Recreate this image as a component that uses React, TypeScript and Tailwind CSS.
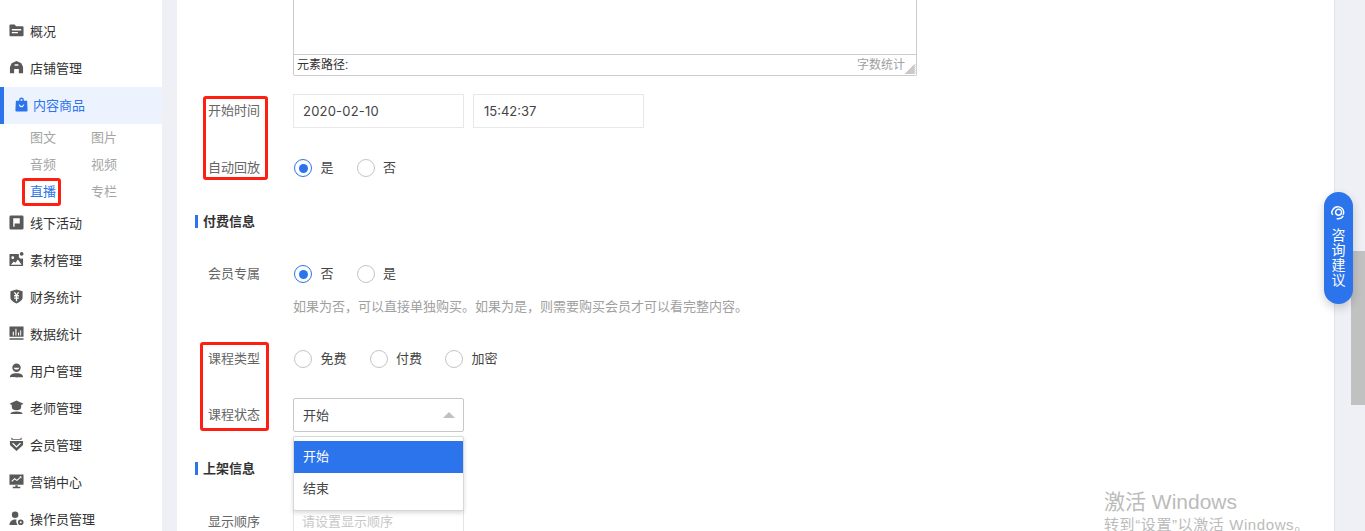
import React from "react";

const F = "[font-family:'Liberation_Sans','Noto_Sans_CJK_SC',sans-serif]";

const icons: Record<string, React.ReactNode> = {
  folder: <path fillRule="evenodd" d="M.5 2.500A1 1 0 011.500 1.500h4.500l1.500 2h7a1 1 0 011 1V13a1 1 0 01-1 1h-13a1 1 0 01-1-1zM3 6.500V8h10V6.500zm0 3V11h6.500V9.500z" />,
  shop: <path fillRule="evenodd" d="M8 1l5.200 2.500L15 7.500V14h-4.500V9.500h-5V14H1V7.500l1.800-4zM6 4.500V6h4V4.500z" />,
  bag: <path fillRule="evenodd" d="M5.500 4V3a2.500 2.500 0 015 0v1H14l.5 10.500a1 1 0 01-1 1h-11a1 1 0 01-1-1L2 4zM7 4h2V3a1 1 0 00-2 0zM5 8c.6 2 1.600 3 3 3s2.400-1 3-3h-1c-.4 1-1 1.500-2 1.500S6.400 9 6 8z" />,
  flag: <path fillRule="evenodd" d="M2 .500h12a1.500 1.500 0 011.500 1.500v12a1.500 1.500 0 01-1.500 1.500H2A1.500 1.500 0 01.500 14V2A1.500 1.500 0 012 .500zM4.500 3.500v9H6V9h5.500V3.500z" />,
  image: <path fillRule="evenodd" d="M.5 2H10.500v2.500a2.500 2.500 0 003.500 2.500h1v8H.5zM4 4.500a1.500 1.500 0 100 3 1.500 1.500 0 000-3zM2 13.500h11.500L9.500 8 6.800 11.500 5 10zM13.500 0a2 2 0 110 4 2 2 0 010-4z" />,
  money: <path fillRule="evenodd" d="M8 .500l6.500 2v6.500c0 3-3.500 5-6.500 6.500-3-1.500-6.500-3.500-6.500-6.500V2.500zM5 3.500L7 6.500H5.500V8H7.300v1H5.500v1.500h1.800V13h1.400v-2.500h1.800V9H8.700V8h1.800V6.500H9l2-3H9.300L8 5.700 6.700 3.500z" />,
  chart: <path fillRule="evenodd" d="M.5.500h15v11H.5zM4 6v4h1.200V6zm2.800-3v7H8V3zm2.800 4v3h1.200V7zm2.400-2.500V10H13V4.500zM.5 13h15v1.700H.5z" />,
  user: <path fillRule="evenodd" d="M8 .500a4.500 4.500 0 110 9 4.500 4.500 0 010-9zM5 5c.5 1.300 1.600 2 3 2s2.500-.7 3-2zM1 15c0-2.500 2.500-4 7-4s7 1.500 7 4c0 .5-14 .5-14 0z" />,
  teacher: <path fillRule="evenodd" d="M8 .500L15.500 4 13 5.300V7.500C13 9.700 11 11 8 11S3 9.700 3 7.500V5.300L.5 4zM1.500 15c0-1.800 2-2.800 6.500-2.800s6.500 1 6.500 2.800z" />,
  vip: <path fillRule="evenodd" d="M2.500.500L4.500 2h7l2-1.500V3h-11zM1 4.300h14V8.500L8 15 1 8.500zM4.300 6L8 9.500 11.700 6l1 1L8 11.500 3.300 7z" />,
  market: <path fillRule="evenodd" d="M.5.500h15v11H.5zM2.500 7.500l.8.800L6 5.800 8.500 7.500l4-3.500 .7.700V2.500H11l.8.800L8.300 6 6 4.300zM6.800 12h2.400v1.700H12V15.300H4V13.700h2.800z" />,
  op: <path fillRule="evenodd" d="M6.500.500a3.500 3.500 0 110 7 3.500 3.500 0 010-7zM.5 15c0-3.500 2.500-6 6-6 .8 0 1.500.1 1.500.1-.6 1.800-.2 4.300 1.200 5.900zM12.500 9a3 3 0 110 6 3 3 0 010-6zm0 2a1 1 0 100 2 1 1 0 000-2z" />,
};

function Icon({ name, className = "text-[#595959]" }: { name: string; className?: string }) {
  return (
    <svg viewBox="0 0 16 16" className={`w-[15px] h-[15px] shrink-0 fill-current ${className}`}>
      {icons[name]}
    </svg>
  );
}

function NavItem({ icon, label }: { icon: string; label: string }) {
  return (
    <div className="h-[37px] flex items-center pl-[9px] gap-[6px] text-[13px] text-[#333]">
      <span className="-mt-[3px]"><Icon name={icon} /></span>
      <span>{label}</span>
    </div>
  );
}

function Radio({ checked, label }: { checked?: boolean; label: string }) {
  return (
    <label className="flex items-center mr-[23px]">
      <span className={`w-[18px] h-[18px] rounded-full border-[1.5px] flex items-center justify-center ${checked ? "border-[#2c74ec]" : "border-[#c4c4c4]"}`}>
        {checked && <span className="w-[9px] h-[9px] rounded-full bg-[#2c74ec]" />}
      </span>
      <span className="ml-[8.5px] text-[13px] text-[#444]">{label}</span>
    </label>
  );
}

function Row({ label, className, children }: { label: string; className: string; children?: React.ReactNode }) {
  return (
    <div className={`flex items-center ${className}`}>
      <div className="w-[116px] pr-[33px] text-right text-[13px] text-[#666] shrink-0">{label}</div>
      {children}
    </div>
  );
}

function Section({ label, className }: { label: string; className: string }) {
  return (
    <div className={`flex items-center pl-[18px] ${className}`}>
      <span className="w-[3px] h-[13px] bg-[#2c74ec] mr-[5px]" />
      <span className="text-[13px] font-bold text-[#333] pt-px">{label}</span>
    </div>
  );
}

function RedBox({ className }: { className: string }) {
  return <div className={`absolute border-[3px] border-[#ff1f12] rounded-[3px] ${className}`} />;
}

export default function App() {
  return (
    <div className={`relative h-[531px] w-[1365px] overflow-hidden flex bg-[#eff0f6] ${F}`}>
      <aside className="w-[162px] h-full bg-white shrink-0 pt-[13px]">
        <NavItem icon="folder" label="概况" />
        <NavItem icon="shop" label="店铺管理" />
        <div className="h-[37px] flex items-center pl-[10px] gap-[4px] bg-[#ecf3fe] border-l-[4px] border-[#2c74ec] text-[13px] text-[#2c74ec]">
          <span className="-mt-[3px]"><Icon name="bag" className="text-[#2c74ec]" /></span>
          <span>内容商品</span>
        </div>
        <div className="grid grid-cols-[61px_61px] pl-[30px] text-[13px] text-[#a5a5a5] auto-rows-[27px] items-center">
          <span>图文</span><span>图片</span>
          <span>音频</span><span>视频</span>
          <span className="text-[#2c74ec] pt-px">直播</span><span className="pt-px">专栏</span>
        </div>
        <div>
          <NavItem icon="flag" label="线下活动" />
          <NavItem icon="image" label="素材管理" />
          <NavItem icon="money" label="财务统计" />
          <NavItem icon="chart" label="数据统计" />
          <NavItem icon="user" label="用户管理" />
          <NavItem icon="teacher" label="老师管理" />
          <NavItem icon="vip" label="会员管理" />
          <NavItem icon="market" label="营销中心" />
          <NavItem icon="op" label="操作员管理" />
        </div>
      </aside>

      <main className="ml-[15px] w-[1158px] h-full bg-white border-r border-[#e3e3e8] shrink-0">
        <div className="ml-[116px] w-[624px] h-[76px] border border-t-0 border-[#cccccc] rounded-b-[2px] flex flex-col justify-end">
          <div className="h-[21px] border-t border-[#cccccc] flex items-center justify-between pl-[3px] text-[12px] text-[#333]">
            <span>元素路径:</span>
            <span className="flex items-center">
              <span className="text-[#a0a0a0] text-[12px] mr-[-1px]">字数统计</span>
              <svg viewBox="0 0 12 12" className="w-[12px] h-[12px] mt-[8px] stroke-[#777]" strokeWidth="0.800">
                <path d="M11 1.500L1.500 11M11 3.500L3.500 11M11 5.500L5.500 11M11 7.500L7.500 11M11 9.500L9.500 11" />
              </svg>
            </span>
          </div>
        </div>

        <Row label="开始时间" className="mt-[18px] h-[34px]">
          <div className="w-[171px] h-[34px] border border-[#e8e8e8] flex items-center pl-[9px] pt-px text-[13px] tracking-[0.2px] text-[#444] [font-family:Inter,sans-serif]">2020-02-10</div>
          <div className="ml-[9px] w-[171px] h-[34px] border border-[#e8e8e8] flex items-center pl-[10px] pt-px text-[13px] text-[#444] [font-family:Inter,sans-serif]">15:42:37</div>
        </Row>
        <Row label="自动回放" className="mt-[23px] h-[34px]">
          <span className="ml-px" />
          <Radio checked label="是" />
          <Radio label="否" />
        </Row>
        <Section label="付费信息" className="mt-[19px] h-[34px]" />
        <Row label="会员专属" className="mt-[19px] h-[34px]">
          <span className="ml-px" />
          <Radio checked label="否" />
          <Radio label="是" />
        </Row>
        <div className="ml-[116px] mt-[7px] h-[18px] leading-[18px] text-[13px] text-[#a0a0a0]">如果为否，可以直接单独购买。如果为是，则需要购买会员才可以看完整内容。</div>
        <Row label="课程类型" className="mt-[26px] h-[34px]">
          <span className="ml-px" />
          <Radio label="免费" />
          <Radio label="付费" />
          <Radio label="加密" />
        </Row>
        <Row label="课程状态" className="mt-[22px] h-[34px]">
          <div className="w-[171px] h-[34px] border border-[#c8c8c8] rounded-[2px] flex items-center justify-between pl-[9px] pr-[8px] text-[13px] text-[#444]">
            <span className="pt-px">开始</span>
            <span className="w-0 h-0 border-x-[6px] border-x-transparent border-b-[6px] border-b-[#c0c0c0]" />
          </div>
        </Row>
        <Section label="上架信息" className="mt-[19px] h-[34px]" />
        <Row label="显示顺序" className="mt-[20px] h-[34px]">
          <div className="w-[171px] h-[34px] border border-[#e4e4e4] flex items-center pl-[8px] text-[13px] text-[#c8c8c8]">请设置显示顺序</div>
        </Row>
      </main>

      <div className="flex-1 h-full bg-[#eff0f6] relative">
        <div className="absolute right-0 top-[251px] w-[14px] h-[154px] bg-[#c1c1c1]" />
      </div>

      <div className="absolute left-[293px] top-[436px] w-[171px] h-[75px] bg-white border border-[#d8d8d8] rounded-[2px] shadow-[0_2px_4px_rgba(0,0,0,0.15)] pt-[4px] text-[13px]">
        <div className="h-[32px] bg-[#2c74ec] text-white flex items-center pl-[9px]">开始</div>
        <div className="h-[32px] text-[#444] flex items-center pl-[9px]">结束</div>
      </div>

      <RedBox className="left-[203px] top-[96px] w-[65px] h-[84px]" />
      <RedBox className="left-[22px] top-[178px] w-[39px] h-[28px]" />
      <RedBox className="left-[200px] top-[342px] w-[69px] h-[89px]" />

      <div className="absolute left-[1324px] top-[192px] w-[29px] h-[112px] rounded-[15px] bg-[#2c74ec] shadow-[0_4px_10px_rgba(0,0,0,0.18)] flex flex-col items-center pt-[13px] text-white">
        <svg viewBox="0 0 16 16" className="w-[15px] h-[15px] fill-none stroke-white" strokeWidth="1.500">
          <path d="M2 10.500C.5 9 .8 6.500 2 5c1.500-2.500 4-3.500 6.500-3 2.500.5 4.500 2.500 5 5 .2 1.300 0 2.500-.8 3.500" />
          <path d="M5 8.500a3.200 3.200 0 116.200 0 3.200 3.200 0 01-6.200 0z" />
          <path d="M6 14.500c3 .6 5.500-.5 7-3" />
        </svg>
        <div className="mt-[8px] text-[14px] leading-[15px] flex flex-col items-center">
          <span>咨</span><span>询</span><span>建</span><span>议</span>
        </div>
      </div>

      <div className="absolute left-[1104px] top-[490px] text-[#bbbbbb] pointer-events-none">
        <div className="text-[21px] leading-[24px]">激活 Windows</div>
        <div className="text-[15px] leading-[18px] mt-[2px] tracking-[0.6px]">转到“设置”以激活 Windows。</div>
      </div>
    </div>
  );
}
